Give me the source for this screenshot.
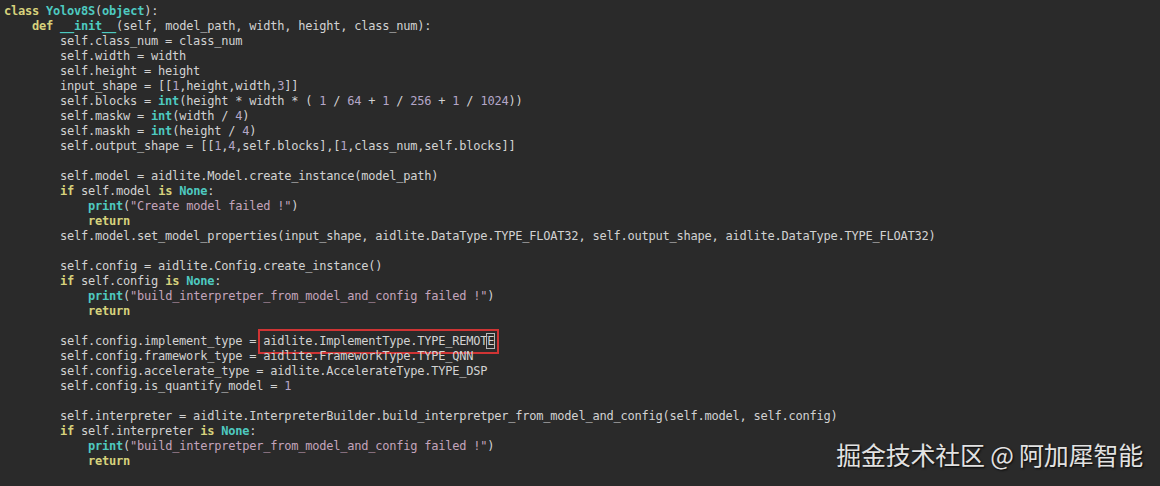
const K = 'text-[#d7d27c] font-bold'
const T = 'text-[#4ec9c0] font-bold'
const S = 'text-[#c4a4bc]'
const N = 'text-[#b4a6c8]'

// each line: list of [className, text]; plain text has no class
const lines = [
  [[K, 'class'], ['', ' '], [T, 'Yolov8S'], ['', '('], [T, 'object'], ['', '):']],
  [['', '    '], [K, 'def'], ['', ' '], [T, '__init__'], ['', '(self, model_path, width, height, class_num):']],
  [['', '        self.class_num = class_num']],
  [['', '        self.width = width']],
  [['', '        self.height = height']],
  [['', '        input_shape = [['], [N, '1'], ['', ',height,width,'], [N, '3'], ['', ']]']],
  [['', '        self.blocks = '], [T, 'int'], ['', '(height * width * ( '], [N, '1'], ['', ' / '], [N, '64'], ['', ' + '], [N, '1'], ['', ' / '], [N, '256'], ['', ' + '], [N, '1'], ['', ' / '], [N, '1024'], ['', '))']],
  [['', '        self.maskw = '], [T, 'int'], ['', '(width / '], [N, '4'], ['', ')']],
  [['', '        self.maskh = '], [T, 'int'], ['', '(height / '], [N, '4'], ['', ')']],
  [['', '        self.output_shape = [['], [N, '1'], ['', ','], [N, '4'], ['', ',self.blocks],['], [N, '1'], ['', ',class_num,self.blocks]]']],
  [],
  [['', '        self.model = aidlite.Model.create_instance(model_path)']],
  [['', '        '], [K, 'if'], ['', ' self.model '], [K, 'is'], ['', ' '], [T, 'None'], ['', ':']],
  [['', '            '], [T, 'print'], ['', '('], [S, '"Create model failed !"'], ['', ')']],
  [['', '            '], [K, 'return']],
  [['', '        self.model.set_model_properties(input_shape, aidlite.DataType.TYPE_FLOAT32, self.output_shape, aidlite.DataType.TYPE_FLOAT32)']],
  [],
  [['', '        self.config = aidlite.Config.create_instance()']],
  [['', '        '], [K, 'if'], ['', ' self.config '], [K, 'is'], ['', ' '], [T, 'None'], ['', ':']],
  [['', '            '], [T, 'print'], ['', '('], [S, '"build_interpretper_from_model_and_config failed !"'], ['', ')']],
  [['', '            '], [K, 'return']],
  [],
  'highlight',
  [['', '        self.config.framework_type = aidlite.FrameworkType.TYPE_QNN']],
  [['', '        self.config.accelerate_type = aidlite.AccelerateType.TYPE_DSP']],
  [['', '        self.config.is_quantify_model = '], [N, '1']],
  [],
  [['', '        self.interpreter = aidlite.InterpreterBuilder.build_interpretper_from_model_and_config(self.model, self.config)']],
  [['', '        '], [K, 'if'], ['', ' self.interpreter '], [K, 'is'], ['', ' '], [T, 'None'], ['', ':']],
  [['', '            '], [T, 'print'], ['', '('], [S, '"build_interpretper_from_model_and_config failed !"'], ['', ')']],
  [['', '            '], [K, 'return']],
]

function Line({ parts }) {
  return (
    <div className="h-[15px] leading-[15px] whitespace-pre">
      {parts.map(([cls, text], i) => (
        <span key={i} className={cls}>{text}</span>
      ))}
    </div>
  )
}

export default function App() {
  return (
    <div className="relative w-[1160px] h-[486px] overflow-hidden bg-[#2a2a2a] text-[#d2d2d2] font-['DejaVu_Sans_Mono',monospace] text-[12px] tracking-[-0.22px]">
      <div className="pt-[4px] pl-[4px]">
        {lines.map((parts, i) =>
          parts === 'highlight' ? (
            <div key={i} className="h-[15px] leading-[15px] whitespace-pre">
              <span>{'        self.config.implement_type = '}</span>
              <span className="inline-block h-[15px] outline-[2.5px] outline-solid outline-[#cf3434] outline-offset-[3px]">
                {'aidlite.ImplementType.TYPE_REMOT'}
                <span className="outline outline-1 outline-[#b8b8b8]">E</span>
              </span>
            </div>
          ) : (
            <Line key={i} parts={parts} />
          )
        )}
      </div>

      {/* watermark */}
      <div className="absolute right-[17px] bottom-[18px] text-[25px] leading-[28px] text-[#e2e2e2] font-['Noto_Sans_CJK_SC',sans-serif] [text-shadow:1px_1px_2px_rgba(0,0,0,0.85)]">
        掘金技术社区 @ 阿加犀智能
      </div>
    </div>
  )
}
